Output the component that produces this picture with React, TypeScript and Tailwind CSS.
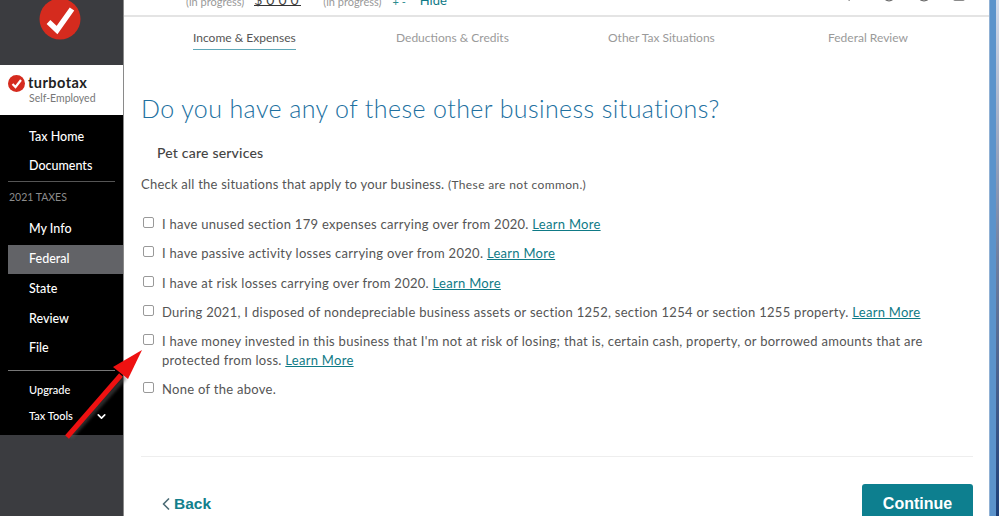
import { ChevronDown, ChevronLeft, CircleUser, HelpCircle, Search, Square } from "lucide-react";

const font = "font-['Lato','Noto_Sans',sans-serif]";

const situations = [
  "I have unused section 179 expenses carrying over from 2020.",
  "I have passive activity losses carrying over from 2020.",
  "I have at risk losses carrying over from 2020.",
  "During 2021, I disposed of nondepreciable business assets or section 1252, section 1254 or section 1255 property.",
  "I have money invested in this business that I'm not at risk of losing; that is, certain cash, property, or borrowed amounts that are protected from loss.",
];

function NavItem({ label, active, small }: { label: string; active?: boolean; small?: boolean }) {
  return (
    <div
      className={`flex items-center ml-2 pl-[21px] font-medium text-white ${
        small ? "h-[26px] text-[11px]" : "h-[29.5px] text-[12.5px]"
      } ${active ? "bg-[#626367]" : ""}`}
    >
      {label}
    </div>
  );
}

function Sidebar() {
  return (
    <aside className="w-[124px] shrink-0 flex flex-col border-r border-[#8a8a8a] bg-[#3b3c40]">
      <div className="h-[65px] pl-[39px] overflow-hidden">
        <svg width="42" height="42" viewBox="0 0 42 42" className="-mt-[2px]">
          <circle cx="21" cy="21" r="20.5" fill="#d52b1e" />
          <path d="M9.5 24l8.5 8L33 11" fill="none" stroke="#fff" strokeWidth="5.5" />
        </svg>
      </div>
      <div className="h-[50px] bg-white pl-2 pt-[9px]">
        <div className="flex items-center gap-[3px] h-[18px]">
          <svg width="17" height="17" viewBox="0 0 17 17">
            <circle cx="8.5" cy="8.5" r="8.5" fill="#d52b1e" />
            <path d="M4.5 9l3 3L13 5" fill="none" stroke="#fff" strokeWidth="2.2" />
          </svg>
          <span className="text-[14.5px] font-bold text-[#222] leading-none tracking-[0.45px]">turbotax</span>
        </div>
        <div className="pl-[21px] text-[10.5px] leading-[12px] text-[#777]">Self-Employed</div>
      </div>
      <nav className="h-[320px] bg-black pt-[7.5px]">
        <NavItem label="Tax Home" />
        <NavItem label="Documents" />
        <div className="mx-2 -mt-[0.5px] border-t border-[#555]" />
        <div className="ml-[9px] mt-[9px] mb-[11px] text-[10.5px] leading-[13px] text-[#8c8c8c]">2021 TAXES</div>
        <NavItem label="My Info" />
        <NavItem label="Federal" active />
        <div className="mt-[1px]">
          <NavItem label="State" />
        </div>
        <NavItem label="Review" />
        <NavItem label="File" />
        <div className="mx-2 mt-[6px] mb-[7px] border-t border-[#777]" />
        <NavItem label="Upgrade" small />
        <div className="relative">
          <NavItem label="Tax Tools" small />
          <ChevronDown className="absolute right-[15px] top-[6px] text-white" size={13} strokeWidth={3} />
        </div>
      </nav>
    </aside>
  );
}

function TopBar() {
  return (
    <div className="h-[17px] shrink-0 overflow-hidden border-b-2 border-[#e4e4e4] flex items-end text-[11px] text-[#999] pl-[62px]">
      <span className="leading-[13px] mb-[7px]">(in progress)</span>
      <span className="ml-[10px] mb-[9px] w-[47px] h-[20px] flex items-end border-b border-[#333] text-[#444] text-[14px] leading-[11px] tracking-[4px]">
        $000
      </span>
      <span className="ml-[22px] leading-[13px] mb-[7px]">(in progress)</span>
      <span className="ml-[11px] leading-[13px] mb-[7px] text-[#2b8c8f]">+ -</span>
      <span className="ml-[14px] leading-[13px] mb-[8px] text-[13px] text-[#0f7a86]">Hide</span>
      <div className="ml-[390px] flex items-end mb-[13px] text-[#666]">
        <Search size={14} />
        <HelpCircle size={14} className="ml-[31px]" />
        <CircleUser size={14} className="ml-[21px]" />
        <Square size={14} className="ml-[21px]" />
      </div>
    </div>
  );
}

function Stepper() {
  return (
    <div className="h-[41px] flex text-[12px] text-[#9a9a9a] pl-[69px] pt-[12px]">
      <div className="w-[203px]">
        <span className="inline-block h-[21px] border-b border-[#5fa8b8] text-[#555]">Income &amp; Expenses</span>
      </div>
      <div className="w-[212px]">Deductions &amp; Credits</div>
      <div className="w-[220px]">Other Tax Situations</div>
      <div>Federal Review</div>
    </div>
  );
}

function Row({ text, link, className }: { text: string; link?: boolean; className?: string }) {
  return (
    <div className={`flex items-start gap-[8px] ${className ?? ""}`}>
      <span className="ml-[2px] mt-[1px] w-[11px] h-[11px] shrink-0 rounded-[2px] border border-[#999] bg-white" />
      <p className="flex-1 text-[13px] leading-[19px] text-[#555] tracking-[0.285px] -mt-[1px] pr-[34px]">
        {text}{" "}
        {link && <span className="text-[#0f7a86] underline">Learn More</span>}
      </p>
    </div>
  );
}

function Main() {
  return (
    <main className="flex-1 min-w-0 flex flex-col bg-white">
      <TopBar />
      <Stepper />
      <div className="pl-[17px] pr-[16px] flex-1">
        <h1 className="mt-[42px] text-[25px] leading-[32px] font-light text-[#21709f] tracking-[0.4px]">
          Do you have any of these other business situations?
        </h1>
        <div className="mt-[20px] ml-4 text-[14px] leading-[18px] font-medium text-[#444] tracking-[0.2px]">Pet care services</div>
        <p className="mt-[13px] text-[13px] leading-[18px] text-[#555] tracking-[0.23px]">
          Check all the situations that apply to your business.{" "}
          <span className="text-[12px] tracking-[0.37px]">(These are not common.)</span>
        </p>
        <div className="mt-[22px]">
          {situations.map((s) => (
            <Row key={s} className="mb-[11.3px]" text={s} link />
          ))}
          <Row text="None of the above." />
        </div>
        <div className="mt-[57px] border-t border-[#eeeeee]" />
        <div className="mt-[27px] flex justify-between items-start">
          <div className="ml-[18px] mt-[8px] flex items-center text-[#127f8c] text-[15.5px] font-bold font-['Liberation_Sans',sans-serif]">
            <ChevronLeft size={20} strokeWidth={2} className="text-[#4b6b75] -ml-[3px] -mr-[2px]" />
            Back
          </div>
          <div className="w-[111px] h-[40px] rounded-[3px] bg-[#0d7f8f] flex items-center justify-center text-white text-[16px] font-bold font-['Liberation_Sans',sans-serif]">
            Continue
          </div>
        </div>
      </div>
    </main>
  );
}

export default function App() {
  return (
    <div className={`relative w-[999px] h-[516px] overflow-hidden flex ${font}`}>
      <Sidebar />
      <Main />
      {/* window frame and the desktop wallpaper behind it */}
      <div className="w-[7px] shrink-0 border-l border-[#8fb0d4] bg-[#5b93cb]" />
      <div className="w-[3px] shrink-0 bg-linear-to-b from-[#d5ddec] via-[#6f7f9f] to-[#1c3f78]" />
      {/* red annotation arrow */}
      <svg className="absolute left-[55px] top-[345px]" width="100" height="100" viewBox="0 0 100 100">
        <defs>
          <filter id="arrow-shadow">
            <feGaussianBlur stdDeviation="1.5" />
          </filter>
        </defs>
        <path d="M15 92L70 32" stroke="#555" strokeWidth="5" opacity="0.55" filter="url(#arrow-shadow)" />
        <path d="M12 92L66 30" stroke="#ee1111" strokeWidth="5" fill="none" />
        <path d="M87 5L58 22L73 34Z" fill="#ee1111" />
      </svg>
    </div>
  );
}
